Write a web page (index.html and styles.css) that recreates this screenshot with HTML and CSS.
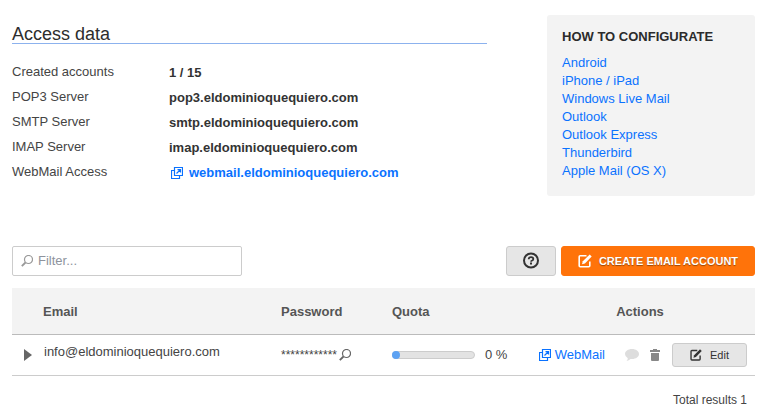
FILE: index.html
```html
<!DOCTYPE html>
<html lang="en">
<head>
    <meta charset="UTF-8">
    <meta name="viewport" content="width=device-width, initial-scale=1.0">
    <title>Email accounts</title>
    <link rel="stylesheet" href="styles.css">
</head>
<body>
    <!-- Shared icons -->
    <svg class="sprite" width="0" height="0" aria-hidden="true">
        <symbol id="icon-external" viewBox="0 0 12 12">
            <path d="M3.5.5h8v8h-8z M3.500 3.500h-3v8h8v-3" fill="none" stroke="currentColor" stroke-width="1.2"/>
            <path d="M5.500 6.500l3.500-3.500 M6.500 2.600h3v3" fill="none" stroke="currentColor" stroke-width="1.2"/>
        </symbol>
        <symbol id="icon-search" viewBox="0 0 12 12">
            <circle cx="7.500" cy="4.500" r="4" fill="none" stroke="currentColor" stroke-width="1.2"/>
            <path d="M4.500 7.500L.8 11.200" fill="none" stroke="currentColor" stroke-width="1.800"/>
        </symbol>
        <symbol id="icon-edit" viewBox="0 0 14 14">
            <path d="M8.500 1.700H2.200q-1 0-1 1v9.100q0 1 1 1h8.600q1 0 1-1V7.500" fill="none" stroke="currentColor" stroke-width="1.600"/>
            <path d="M4 10.300l.8-3L11.700.4l2 2L6.900 9.400z" fill="currentColor"/>
        </symbol>
    </svg>

    <div class="page">
        <div class="top">
            <section class="access">
                <h1>Access data</h1>
                <dl>
                    <dt>Created accounts</dt>
                    <dd>1 / 15</dd>
                    <dt>POP3 Server</dt>
                    <dd>pop3.eldominioquequiero.com</dd>
                    <dt>SMTP Server</dt>
                    <dd>smtp.eldominioquequiero.com</dd>
                    <dt>IMAP Server</dt>
                    <dd>imap.eldominioquequiero.com</dd>
                    <dt>WebMail Access</dt>
                    <dd><a class="external" href="#"><svg class="icon"><use href="#icon-external"/></svg>webmail.eldominioquequiero.com</a></dd>
                </dl>
            </section>

            <aside class="configure">
                <h2>HOW TO CONFIGURATE</h2>
                <ul>
                    <li><a href="#">Android</a></li>
                    <li><a href="#">iPhone / iPad</a></li>
                    <li><a href="#">Windows Live Mail</a></li>
                    <li><a href="#">Outlook</a></li>
                    <li><a href="#">Outlook Express</a></li>
                    <li><a href="#">Thunderbird</a></li>
                    <li><a href="#">Apple Mail (OS X)</a></li>
                </ul>
            </aside>
        </div>

        <div class="toolbar">
            <label class="filter">
                <svg class="icon"><use href="#icon-search"/></svg>
                <input type="text" placeholder="Filter..." aria-label="Filter">
            </label>
            <div class="buttons">
                <button type="button" class="btn help" aria-label="Help">
                    <svg width="18" height="18" viewBox="0 0 18 18">
                        <circle cx="9" cy="8.500" r="7" fill="none" stroke="currentColor" stroke-width="2"/>
                        <path d="M6.700 7.200q0-2 2.300-2t2.300 1.700q0 1-1.200 1.600-1 .4-1 1.200" fill="none" stroke="currentColor" stroke-width="1.800"/>
                        <path d="M8 10.500h2v2H8z" fill="currentColor"/>
                    </svg>
                </button>
                <button type="button" class="btn create"><svg class="icon"><use href="#icon-edit"/></svg>CREATE EMAIL ACCOUNT</button>
            </div>
        </div>

        <table class="accounts">
            <thead>
                <tr>
                    <th class="col-toggle"></th>
                    <th class="col-email">Email</th>
                    <th class="col-password">Password</th>
                    <th class="col-quota">Quota</th>
                    <th class="col-actions">Actions</th>
                </tr>
            </thead>
            <tbody>
                <tr>
                    <td>
                        <button type="button" class="plain toggle" aria-label="Show details">
                            <svg width="8" height="12" viewBox="0 0 8 12"><path d="M0 0l8 6-8 6z" fill="currentColor"/></svg>
                        </button>
                    </td>
                    <td class="email">info@eldominioquequiero.com</td>
                    <td>
                        <div class="password">
                            <span>************</span>
                            <button type="button" class="plain" aria-label="Show password"><svg class="icon"><use href="#icon-search"/></svg></button>
                        </div>
                    </td>
                    <td>
                        <div class="quota">
                            <div class="bar"><div class="used"></div></div>
                            <span>0 %</span>
                        </div>
                    </td>
                    <td>
                        <div class="actions">
                            <a class="external" href="#"><svg class="icon"><use href="#icon-external"/></svg>WebMail</a>
                            <button type="button" class="plain comment" aria-label="Comment">
                                <svg width="14" height="12" viewBox="0 0 14 12"><path d="M7 0c4 0 7 2.200 7 5s-3 5-7 5l-1.500-.1Q4 11.500 1.500 12 3 10.500 2.800 9.200 0 7.800 0 5c0-2.800 3-5 7-5z" fill="currentColor"/></svg>
                            </button>
                            <button type="button" class="plain delete" aria-label="Delete">
                                <svg width="10" height="12" viewBox="0 0 10 12"><path d="M3 0h4v1h3v2H0V1h3z M1 4h8v7q0 1-1 1H2q-1 0-1-1z" fill="currentColor"/></svg>
                            </button>
                            <button type="button" class="btn edit"><svg class="icon"><use href="#icon-edit"/></svg>Edit</button>
                        </div>
                    </td>
                </tr>
            </tbody>
        </table>

        <p class="total">Total results 1</p>
    </div>
</body>
</html>
```
FILE: styles.css
```css
body {
    margin: 0;
    background-color: #fff;
    color: #444;
    font-family: "Liberation Sans", Arial, sans-serif;
    font-size: 13px;
    line-height: 18px;
}

a {
    color: #0a72ff;
    text-decoration: none;
}

.sprite {
    position: absolute;
}

.icon {
    width: 12px;
    height: 12px;
    flex: none;
}

.page {
    padding: 15px 16px 0 12px;
}

.top {
    display: flex;
    align-items: flex-start;
    gap: 60px;
    margin-bottom: 50px;
}

/* Access data */
.access {
    flex: 1;
}

.access h1 {
    margin: 0 0 16px;
    padding-top: 10px;
    border-bottom: 1px solid #8cb2ee;
    color: #2d2d2d;
    font-size: 18px;
    font-weight: normal;
    line-height: 18px;
}

.access dl {
    display: grid;
    grid-template-columns: 157px 1fr;
    margin: 0;
    line-height: 25px;
}

.access dt {
    margin-top: -1px;
}

.access dd {
    margin: 0;
    color: #333;
    font-weight: bold;
}

.external {
    display: flex;
    align-items: center;
    gap: 4px;
}

.access .external {
    gap: 6px;
    padding-left: 2px;
}

/* How to configurate */
.configure {
    width: 178px;
    padding: 13px 15px 16px;
    border-radius: 3px;
    background-color: #f3f3f3;
}

.configure h2 {
    margin: 0 0 8px;
    color: #2b2b2b;
    font-size: 13px;
    line-height: 18px;
}

.configure ul {
    margin: 0;
    padding: 0;
    list-style: none;
}

/* Filter and buttons */
.toolbar {
    display: flex;
    justify-content: space-between;
    margin-bottom: 12px;
}

.filter {
    display: flex;
    align-items: center;
    gap: 5px;
    box-sizing: border-box;
    width: 230px;
    height: 30px;
    padding: 0 8px;
    border: 1px solid #ccc;
    border-radius: 2px;
    color: #999;
}

.filter input {
    flex: 1;
    min-width: 0;
    padding: 0;
    border: none;
    outline: none;
    font: inherit;
    color: #444;
}

.filter input::placeholder {
    color: #8e939d;
}

.buttons {
    display: flex;
    gap: 5px;
}

.btn {
    display: flex;
    align-items: center;
    justify-content: center;
    box-sizing: border-box;
    padding: 0;
    border: 1px solid #ccc;
    border-radius: 3px;
    background-color: #e6e6e6;
    color: #333;
    font-family: inherit;
    font-size: 11px;
    cursor: pointer;
}

.help {
    width: 50px;
    height: 30px;
}

.create {
    gap: 7px;
    width: 194px;
    height: 30px;
    border-color: #ff730a;
    background-color: #ff730a;
    color: #fff;
    font-weight: bold;
    text-shadow: 0 1px 1px rgba(0, 0, 0, 0.4);
}

.create .icon {
    width: 14px;
    height: 14px;
}

.plain {
    display: flex;
    padding: 0;
    border: none;
    background: none;
    color: #666;
    cursor: pointer;
}

/* Accounts table */
.accounts {
    width: 100%;
    border-collapse: collapse;
    table-layout: fixed;
}

.accounts th {
    height: 44px;
    padding: 2px 0 0;
    border-bottom: 1px solid #bbb;
    background-color: #f3f3f3;
    color: #555;
    text-align: left;
}

.accounts td {
    height: 40px;
    padding: 0;
    border-bottom: 1px solid #ccc;
}

.accounts .email {
    height: 34px;
    padding: 0 0 6px 1px;
}

.col-toggle {
    width: 31px;
}

.col-email {
    width: 238px;
}

.col-password {
    width: 111px;
}

.accounts .col-actions {
    width: 230px;
    text-align: center;
}

.toggle {
    margin-left: 12px;
}

.password {
    display: flex;
    align-items: center;
    gap: 2px;
    font-size: 12px;
}

.quota {
    display: flex;
    align-items: center;
    gap: 10px;
}

.bar {
    box-sizing: border-box;
    width: 83px;
    height: 8px;
    border: 1px solid #ccc;
    border-radius: 4px;
    background-color: #e3e3e3;
}

.used {
    width: 8px;
    height: 8px;
    margin: -1px;
    border-radius: 4px;
    background-color: #5da2f3;
}

.actions {
    display: flex;
    align-items: center;
    justify-content: flex-end;
    padding-right: 8px;
}

.comment {
    margin-left: 20px;
    color: #ddd;
}

.delete {
    margin: 0 12px 0 11px;
    color: #888;
}

.edit {
    gap: 8px;
    width: 75px;
    height: 24px;
}

.total {
    margin: 15px 8px 0;
    font-size: 12px;
    text-align: right;
}
```
